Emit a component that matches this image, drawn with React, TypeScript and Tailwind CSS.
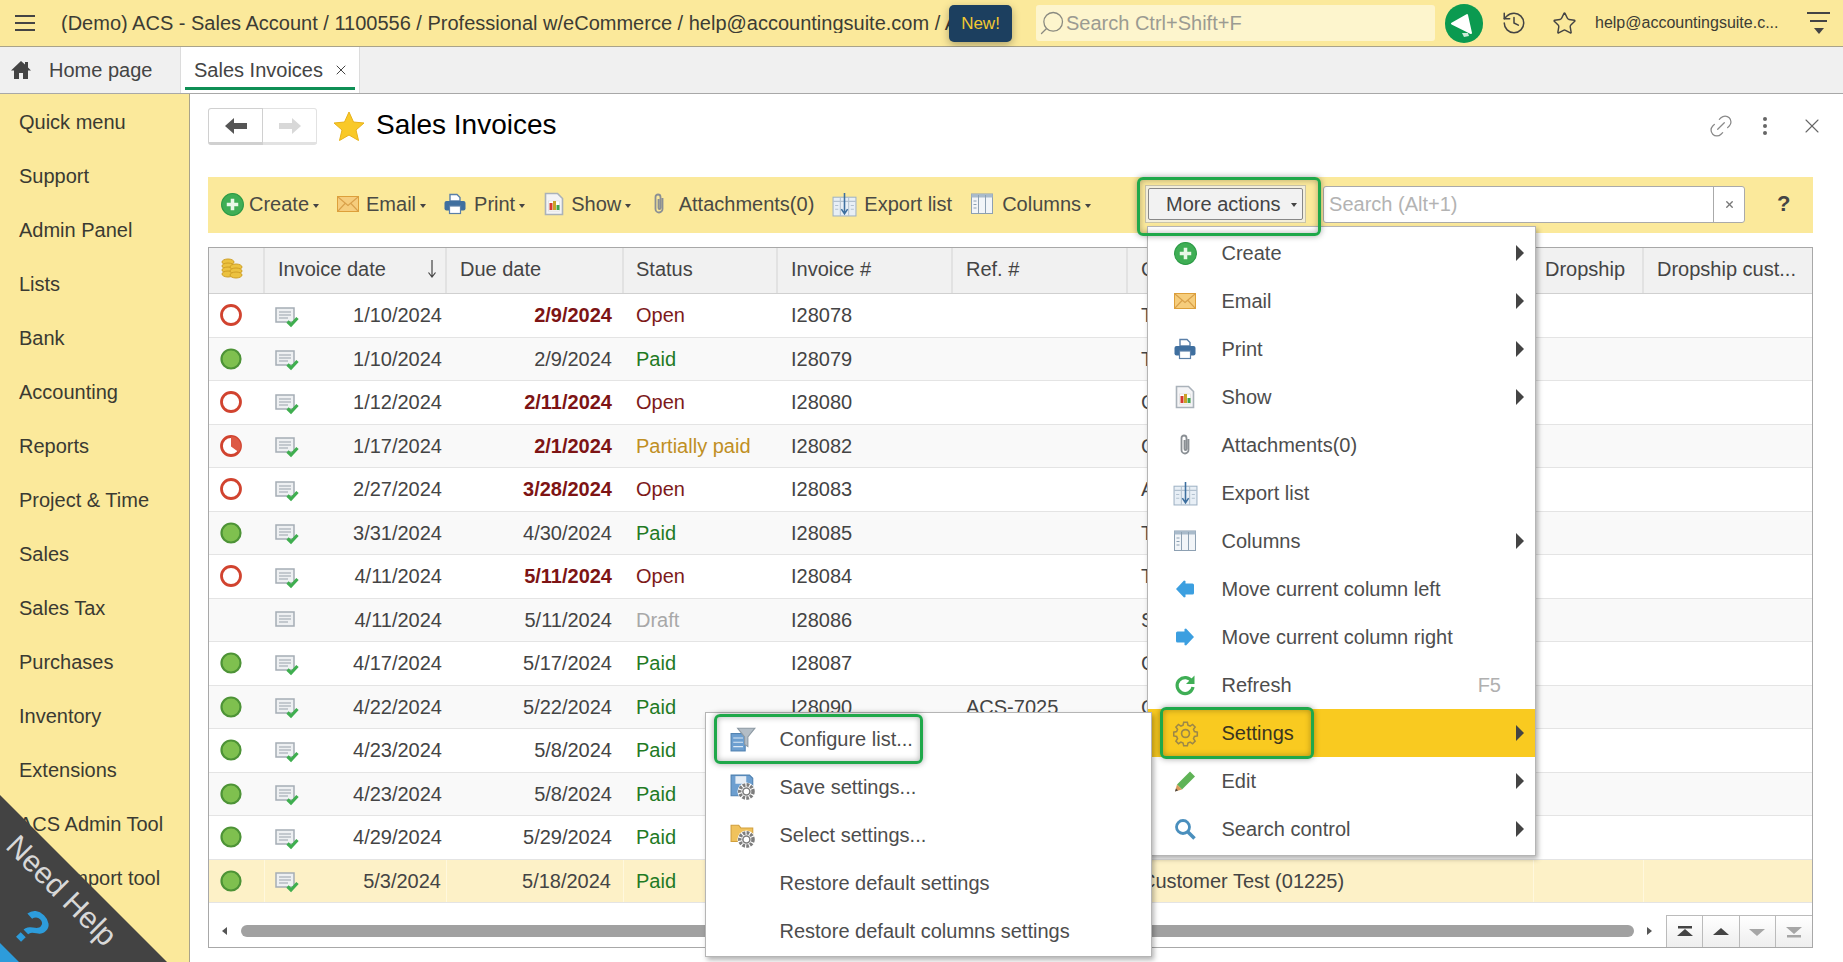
import type { ReactNode } from "react";
import { History, Link2, Search, Star, X } from "lucide-react";

type IconProps = { size?: number };

const CreateIcon = ({ size = 25 }: IconProps) => (
  <svg width={size} height={size} viewBox="0 0 24 24">
    <circle cx="12" cy="12" r="10.5" fill="#3fae55" stroke="#2b9a45" />
    <path d="M12 6.5v11M6.5 12h11" stroke="#e8f7e8" strokeWidth="3.4" />
  </svg>
);

const EmailIcon = ({ size = 24 }: IconProps) => (
  <svg width={size} height={size} viewBox="0 0 24 24">
    <rect x="1.5" y="4.5" width="21" height="15" fill="#f6cd7c" stroke="#dd9f3a" />
    <path d="M2 5l10 8.5L22 5M2 19l7.5-8M22 19l-7.5-8" fill="none" stroke="#d9a04a" strokeWidth="1.1" />
  </svg>
);

const PrintIcon = ({ size = 24 }: IconProps) => (
  <svg width={size} height={size} viewBox="0 0 24 24">
    <path d="M7 9V2.5h7l3 3V9z" fill="#fff" stroke="#5a7fa8" strokeWidth="1.4" />
    <rect x="1.5" y="9" width="21" height="9.5" rx="2" fill="#3f6f9f" />
    <rect x="6.5" y="14" width="11" height="7.5" fill="#fff" stroke="#5a7fa8" strokeWidth="1.2" />
  </svg>
);

const ShowIcon = ({ size = 24 }: IconProps) => (
  <svg width={size} height={size} viewBox="0 0 24 24">
    <path d="M3.5 1.5h12l5 5v16h-17z" fill="#f4f4f6" stroke="#aab2ba" strokeWidth="1.6" />
    <rect x="6.500" y="9" width="11" height="10" fill="#fff" stroke="#d8d8d8" strokeWidth=".6" />
    <rect x="7.500" y="11" width="3" height="7" fill="#d6392f" />
    <rect x="11" y="9" width="3" height="9" fill="#c9a227" />
    <rect x="14.500" y="13" width="3" height="5" fill="#3fa34d" />
  </svg>
);

const ClipIcon = ({ size = 24 }: IconProps) => (
  <svg width={size} height={size} viewBox="0 0 24 24">
    <path d="M15.5 6v11a3.5 3.5 0 0 1-7 0V5a2.500 2.500 0 0 1 5 0v11a1 1 0 0 1-2 0V7" fill="none" stroke="#8a8f94" strokeWidth="1.800" />
  </svg>
);

const ExportIcon = ({ size = 25 }: IconProps) => (
  <svg width={size} height={size} viewBox="0 0 24 24">
    <rect x="1" y="5" width="22" height="18" fill="#e8eff6" stroke="#9fb2c4" />
    <path d="M1 9h22M8 5v18M16 5v18M3 13h3M3 16.500h3M18 13h3M18 16.500h3" stroke="#b3c2d0" />
    <path d="M12 1v19M9 16.500l3 4.500 3-4.500" fill="none" stroke="#3d6f9f" strokeWidth="1.500" />
  </svg>
);

const ColumnsIcon = ({ size = 24 }: IconProps) => (
  <svg width={size} height={size} viewBox="0 0 24 24">
    <rect x="1.5" y="2" width="21" height="19.500" fill="#f2f5f8" stroke="#8da0b2" />
    <rect x="1.5" y="2" width="21" height="3.500" fill="#a9bbcb" />
    <path d="M8.5 3v18M15.5 3v18M3.5 9h3M3.5 12.500h3M3.5 16h3" stroke="#8da0b2" />
  </svg>
);

const MoveLeftIcon = ({ size = 24 }: IconProps) => (
  <svg width={size} height={size} viewBox="0 0 24 24">
    <path d="M3 12l8-8.500 1.500.5v2.500H19.500a1.500 1.500 0 0 1 1.500 1.500v8a1.500 1.500 0 0 1-1.500 1.500H12.500V20l-1.500.5z" fill="#3c9fe0" />
  </svg>
);

const MoveRightIcon = ({ size = 24 }: IconProps) => (
  <svg width={size} height={size} viewBox="0 0 24 24">
    <path d="M21 12l-8-8.500-1.500.5v2.500H4.500A1.500 1.500 0 0 0 3 8v8a1.500 1.500 0 0 0 1.500 1.500h7V20l1.500.5z" fill="#3c9fe0" />
  </svg>
);

const RefreshIcon = ({ size = 24 }: IconProps) => (
  <svg width={size} height={size} viewBox="0 0 24 24">
    <path d="M19 8.500A8 8 0 1 0 20 14" fill="none" stroke="#3fae55" strokeWidth="3.200" />
    <path d="M21.500 2.500v8.500H13z" fill="#3fae55" />
  </svg>
);

const GearIcon = ({ size = 27 }: IconProps) => (
  <svg width={size} height={size} viewBox="0 0 24 24">
    <g fill="none" stroke="#9c8748" strokeWidth="1.500">
      <path
        d="M10.200 2h3.600l.6 2.800 2.100.9 2.400-1.600 2.500 2.500-1.600 2.400.9 2.100 2.800.6v3.600l-2.800.6-.9 2.100 1.600 2.400-2.500 2.500-2.400-1.600-2.100.9-.6 2.800h-3.600l-.6-2.800-2.100-.9-2.400 1.600-2.500-2.500 1.600-2.400-.9-2.100-2.800-.6v-3.600l2.800-.6.9-2.100-1.600-2.400 2.500-2.500 2.400 1.600 2.100-.9z"
        transform="translate(1.100 .2) scale(.91)"
      />
      <circle cx="12" cy="12" r="3.500" />
    </g>
  </svg>
);

const PencilIcon = ({ size = 24 }: IconProps) => (
  <svg width={size} height={size} viewBox="0 0 24 24">
    <path d="M17 2.500l5 5L9 20.500l-5-5z" fill="#5fb356" />
    <path d="M4 15.500l5 5-7 2z" fill="#d99a5b" />
    <path d="M2 22.500l1-3 2 2z" fill="#444" />
  </svg>
);

const SearchBlue = ({ size = 24 }: IconProps) => (
  <svg width={size} height={size} viewBox="0 0 24 24">
    <circle cx="10" cy="10" r="6.500" fill="none" stroke="#4a8fbd" strokeWidth="2.800" />
    <path d="M15 15l6.500 6.500" stroke="#4a8fbd" strokeWidth="3.500" />
  </svg>
);

const ConfigureIcon = ({ size = 26 }: IconProps) => (
  <svg width={size} height={size} viewBox="0 0 24 24">
    <rect x="1" y="7" width="13" height="16" fill="#6d9fd0" stroke="#4f81b0" />
    <path d="M3 11h9M3 15h9M3 19h9" stroke="#dce9f5" />
    <path d="M7 2h16l-6.500 8v9l-3-2v-7z" fill="#b3bdc6" stroke="#8d99a3" />
  </svg>
);

const SmallGear = () => (
  <g transform="translate(6.500 7.500) scale(.72)">
    <circle cx="12" cy="12" r="11.500" fill="#fff" />
    <circle cx="12" cy="12" r="8.500" fill="none" stroke="#7d7d7d" strokeWidth="4.500" strokeDasharray="3.500 1.500" />
    <circle cx="12" cy="12" r="4.500" fill="#fff" stroke="#7d7d7d" strokeWidth="2" />
  </g>
);

const SaveSettingsIcon = ({ size = 26 }: IconProps) => (
  <svg width={size} height={size} viewBox="0 0 24 24">
    <path d="M1 1h17l3 3v16H1z" fill="#6d9fd0" stroke="#4f81b0" />
    <rect x="5" y="2" width="10" height="7" fill="#e6eef6" />
    <SmallGear />
  </svg>
);

const SelectSettingsIcon = ({ size = 26 }: IconProps) => (
  <svg width={size} height={size} viewBox="0 0 24 24">
    <path d="M1 3h7l2 2.500h11V18H1z" fill="#f0c25d" stroke="#d19f3c" />
    <SmallGear />
  </svg>
);

const CoinsIcon = () => (
  <svg width="22" height="22" viewBox="0 0 22 22">
    {[
      [7, 4],
      [7, 8],
      [7, 12],
      [7, 16],
      [15, 9],
      [15, 13],
      [15, 17],
    ].map(([cx, cy]) => (
      <ellipse key={`${cx}-${cy}`} cx={cx} cy={cy} rx="6" ry="3" fill="#ecc23f" stroke="#cf9f25" />
    ))}
  </svg>
);

const StatusIcon = ({ kind }: { kind: string }) => {
  if (kind === "Draft") return <span className="w-[24px] h-[24px]" />;
  if (kind === "Paid")
    return (
      <svg width="24" height="24" viewBox="0 0 24 24">
        <circle cx="12" cy="12" r="9.500" fill="#7fc04f" stroke="#4d9336" strokeWidth="2.200" />
      </svg>
    );
  if (kind === "Partially paid")
    return (
      <svg width="24" height="24" viewBox="0 0 24 24">
        <circle cx="12" cy="12" r="9.500" fill="#fff" stroke="#d1432f" strokeWidth="2.800" />
        <path d="M12 12.500V2.500a9.500 9.500 0 0 1 7.500 15.500z" fill="#dd5a45" />
      </svg>
    );
  return (
    <svg width="24" height="24" viewBox="0 0 24 24">
      <circle cx="12" cy="12" r="9.500" fill="#fff" stroke="#d1432f" strokeWidth="2.800" />
    </svg>
  );
};

const DocIcon = ({ check }: { check: boolean }) => (
  <svg width="24" height="21" viewBox="0 0 24 21" className="mt-[4px]">
    <rect x="1" y="1" width="18" height="14" fill="#eef0f2" stroke="#a5adb5" strokeWidth="1.500" />
    <path d="M4 5h12M4 8h12M4 11h9" stroke="#98a1aa" />
    {check && <path d="M12.500 14.500l3.500 3.500 6.500-7" fill="none" stroke="#3fae4f" strokeWidth="3.200" />}
  </svg>
);

const Caret = () => (
  <span className="ml-[4px] mt-[3px] w-0 h-0 border-x-[3.5px] border-t-[4px] border-x-transparent border-t-[#444]" />
);

const ToolItem = ({
  icon,
  label,
  caret,
  iconGap,
  className,
}: {
  icon: ReactNode;
  label: string;
  caret?: boolean;
  iconGap: string;
  className: string;
}) => (
  <div className={`flex items-center ${className}`}>
    <span className={iconGap}>{icon}</span>
    <span>{label}</span>
    {caret && <Caret />}
  </div>
);

const Arrow = () => (
  <span className="ml-auto mr-[11px] w-0 h-0 border-y-[8px] border-l-[8px] border-y-transparent border-l-[#444]" />
);

const MenuItem = ({
  icon,
  label,
  arrow,
  hint,
  active,
  children,
}: {
  icon?: ReactNode;
  label: string;
  arrow?: boolean;
  hint?: string;
  active?: boolean;
  children?: ReactNode;
}) => (
  <div className={`relative h-[48px] flex items-center ${active ? "bg-[#f9ca20] text-[#3a3520]" : ""}`}>
    <span className="w-[73.5px] shrink-0 flex justify-center pl-[1px]">{icon}</span>
    <span>{label}</span>
    {hint && <span className="ml-auto mr-[34px] text-[#b0b0b0]">{hint}</span>}
    {arrow && <Arrow />}
    {children}
  </div>
);

const Outline = ({ className }: { className: string }) => (
  <div
    className={`absolute z-30 rounded-[6px] border-[3px] border-[#1fa84a] shadow-[0_0_6px_rgba(0,0,0,0.35),inset_0_0_6px_rgba(0,0,0,0.3)] pointer-events-none ${className}`}
  />
);

const sideItems = [
  "Quick menu",
  "Support",
  "Admin Panel",
  "Lists",
  "Bank",
  "Accounting",
  "Reports",
  "Project & Time",
  "Sales",
  "Sales Tax",
  "Purchases",
  "Inventory",
  "Extensions",
  "ACS Admin Tool",
  "ACS Import tool",
];

type Row = {
  date: string;
  due: string;
  late?: boolean;
  status: string;
  num?: string;
  ref?: string;
  customer?: string;
};

const rows: Row[] = [
  { date: "1/10/2024", due: "2/9/2024", late: true, status: "Open", num: "I28078", customer: "T" },
  { date: "1/10/2024", due: "2/9/2024", status: "Paid", num: "I28079", customer: "T" },
  { date: "1/12/2024", due: "2/11/2024", late: true, status: "Open", num: "I28080", customer: "C" },
  { date: "1/17/2024", due: "2/1/2024", late: true, status: "Partially paid", num: "I28082", customer: "C" },
  { date: "2/27/2024", due: "3/28/2024", late: true, status: "Open", num: "I28083", customer: "A" },
  { date: "3/31/2024", due: "4/30/2024", status: "Paid", num: "I28085", customer: "T" },
  { date: "4/11/2024", due: "5/11/2024", late: true, status: "Open", num: "I28084", customer: "T" },
  { date: "4/11/2024", due: "5/11/2024", status: "Draft", num: "I28086", customer: "S" },
  { date: "4/17/2024", due: "5/17/2024", status: "Paid", num: "I28087", customer: "C" },
  { date: "4/22/2024", due: "5/22/2024", status: "Paid", num: "I28090", ref: "ACS-7025", customer: "C" },
  { date: "4/23/2024", due: "5/8/2024", status: "Paid" },
  { date: "4/23/2024", due: "5/8/2024", status: "Paid" },
  { date: "4/29/2024", due: "5/29/2024", status: "Paid" },
  { date: "5/3/2024", due: "5/18/2024", status: "Paid", customer: "Customer Test (01225)" },
];

const statusColor: Record<string, string> = {
  Open: "text-[#7d1a1a]",
  Paid: "text-[#1f7a24]",
  "Partially paid": "text-[#c08f24]",
  Draft: "text-[#a8a8a8]",
};

const gridCols = "grid grid-cols-[56px_182px_177px_154px_175px_175px_406px_110px_168px]";

const HeadCell = ({ children, className = "" }: { children?: ReactNode; className?: string }) => (
  <div className={`flex items-center pb-[3px] border-r-2 border-[#e2e2e2] ${className}`}>{children}</div>
);

export default function App() {
  return (
    <div className="relative w-full h-screen overflow-hidden flex flex-col bg-white text-[20px] leading-none text-[#444] font-['Liberation_Sans',sans-serif]">
      {/* top bar */}
      <header className="h-[47px] shrink-0 flex items-center bg-[#fbe99b] border-b border-[#a9a38a]">
        <div className="ml-[15px] w-[20px] flex flex-col gap-[5px]">
          <span className="h-[2px] bg-[#444]" />
          <span className="h-[2px] bg-[#444]" />
          <span className="h-[2px] bg-[#444]" />
        </div>
        <div className="ml-[26px] w-[888px] overflow-hidden whitespace-nowrap text-[#3c3c34]">
          (Demo) ACS - Sales Account / 1100556 / Professional w/eCommerce / help@accountingsuite.com / A
        </div>
        <div className="w-[63px] h-[37px] flex items-center justify-center rounded-[5px] bg-[#1c3f5f] text-[#f2c832] text-[17px] shadow-[0_3px_8px_rgba(0,0,0,0.3)]">
          New!
        </div>
        <div className="ml-[24px] w-[399px] h-[36px] flex items-center rounded-[3px] bg-[#fdf5cd] text-[#9b9b92]">
          <Search size={28} strokeWidth={1.1} className="ml-[2px] -scale-x-100 text-[#8a8a80]" />
          <span>Search Ctrl+Shift+F</span>
        </div>
        <div className="ml-[10px] w-[38px] h-[39px] flex items-center justify-center rounded-full bg-[#0b9a50]">
          <svg width="38" height="39" viewBox="0 0 38 39">
            <path d="M7 19.500L22 11l4 18z" fill="#fff" stroke="#fff" strokeWidth="2" strokeLinejoin="round" />
            <path d="M17 29l2 4 5-1-1-3z" fill="#cdebd9" />
          </svg>
        </div>
        <History size={26} strokeWidth={1.4} className="ml-[18px] text-[#444]" />
        <Star size={25} strokeWidth={1.4} className="ml-[25px] text-[#444]" />
        <span className="ml-[18px] w-[187px] whitespace-nowrap text-[16px] text-[#3c3c34]">help@accountingsuite.c...</span>
        <div className="ml-[25px] w-[23px] flex flex-col items-center gap-[6px]">
          <span className="w-full h-[2px] bg-[#444]" />
          <span className="w-[17px] h-[2px] bg-[#444]" />
          <span className="w-0 h-0 border-x-[5px] border-t-[6px] border-x-transparent border-t-[#444]" />
        </div>
      </header>

      {/* open tabs */}
      <div className="h-[47px] shrink-0 flex bg-[#f0f0f0] border-b border-[#a8a8a8]">
        <div className="w-[180px] flex items-center">
          <svg width="22" height="20" viewBox="0 0 22 20" className="ml-[10px]">
            <path d="M11 1L1 10.500h3V19h5v-6h4v6h5v-8.500h3l-3-3V2h-3v2.500z" fill="#444" />
          </svg>
          <span className="ml-[17px]">Home page</span>
        </div>
        <div className="w-[180px] px-[4px] bg-white border-x border-[#dcdcdc]">
          <div className="h-[43px] pt-[5px] flex items-center pl-[9px] border-b-[3px] border-[#0f8f55]">
            <span>Sales Invoices</span>
            <X size={16} strokeWidth={1.5} className="ml-[10px]" />
          </div>
        </div>
      </div>

      <div className="flex-1 flex min-h-0">
        {/* left menu */}
        <aside className="w-[190px] shrink-0 bg-[#fbe99b] border-r border-[#a9a38a] pt-px text-[#3a3a32]">
          {sideItems.map((item) => (
            <div key={item} className="h-[54px] flex items-center pl-[19px] whitespace-nowrap">
              {item}
            </div>
          ))}
        </aside>

        <main className="flex-1 min-w-0 pl-[18px] pr-[30px]">
          {/* title row */}
          <div className="mt-[14px] h-[37px] flex items-center">
            <div className="flex h-full">
              <div className="w-[55px] flex items-center justify-center bg-white border border-[#d0d0d0] border-b-[3px] rounded-l-[3px]">
                <svg width="24" height="18" viewBox="0 0 24 18">
                  <path d="M1 9l9-8v5h13v6H10v5z" fill="#555" />
                </svg>
              </div>
              <div className="w-[54px] flex items-center justify-center bg-white border border-l-0 border-[#e2e2e2] border-b-[3px] rounded-r-[3px]">
                <svg width="24" height="18" viewBox="0 0 24 18">
                  <path d="M23 9l-9-8v5H1v6h13v5z" fill="#d8d8d8" />
                </svg>
              </div>
            </div>
            <svg width="32" height="30" viewBox="0 0 32 30" className="ml-[16px] mb-[2px]">
              <path d="M16 1l4.500 10 10.500 1-8 7 2.500 10.500L16 24l-9.500 5.500L9 19l-8-7 10.500-1z" fill="#f9c928" stroke="#e8b21a" />
            </svg>
            <h1 className="ml-[11px] mb-[3px] text-[28px] font-normal text-black">Sales Invoices</h1>
            <Link2 size={28} strokeWidth={1.1} className="ml-auto mr-[28px] mb-[2px] -rotate-45 text-[#8a8a8a]" />
            <div className="mr-[33px] mb-[2px] flex flex-col gap-[3px]">
              <span className="w-[4px] h-[4px] rounded-full bg-[#666]" />
              <span className="w-[4px] h-[4px] rounded-full bg-[#666]" />
              <span className="w-[4px] h-[4px] rounded-full bg-[#666]" />
            </div>
            <X size={24} strokeWidth={1.1} className="mr-[-11px] mb-[2px] text-[#666]" />
          </div>

          {/* toolbar */}
          <div className="mt-[32px] h-[56px] flex items-center pl-[12px] pb-[2px] bg-[#fbe99b] text-[#4a4a44] whitespace-nowrap">
            <ToolItem icon={<CreateIcon />} label="Create" caret iconGap="mr-[4px]" className="" />
            <ToolItem icon={<EmailIcon />} label="Email" caret iconGap="mr-[6px]" className="ml-[17px]" />
            <ToolItem icon={<PrintIcon />} label="Print" caret iconGap="mr-[7px]" className="ml-[17px]" />
            <ToolItem icon={<ShowIcon />} label="Show" caret iconGap="mr-[5px]" className="ml-[17px]" />
            <ToolItem icon={<ClipIcon />} label="Attachments(0)" iconGap="mr-[7.5px]" className="ml-[16px]" />
            <ToolItem icon={<ExportIcon />} label="Export list" iconGap="mr-[7px]" className="ml-[18px]" />
            <ToolItem icon={<ColumnsIcon />} label="Columns" caret iconGap="mr-[8px]" className="ml-[18px]" />

            <div className="relative ml-[54px] w-[161px] h-[38px] p-[2px] border border-[#c9c4a8] bg-[#f3efdc]">
              <div className="h-full flex items-center pl-[17px] border border-[#888] rounded-[2px] bg-[#f2f2f2] text-[#444]">
                More actions
                <span className="ml-[10px] mt-[2px] w-0 h-0 border-x-[3.5px] border-t-[4px] border-x-transparent border-t-[#444]" />
              </div>
              <Outline className="left-[-9px] top-[-9px] w-[184px] h-[59px]" />
            </div>

            <div className="ml-[17px] w-[422px] h-[37px] flex bg-white border border-[#aaa] rounded-[3px] text-[#b3b3b3]">
              <span className="flex-1 flex items-center pl-[5px]">Search (Alt+1)</span>
              <span className="w-[31px] flex items-center justify-center border-l border-[#aaa] text-[#777]">
                <X size={11} strokeWidth={3} />
              </span>
            </div>
            <span className="ml-[32px] text-[#444] font-bold text-[22px]">?</span>
          </div>

          {/* invoice list */}
          <div className="mt-[14px] h-[701px] border border-[#a8a8a8] flex flex-col">
            <div className={`${gridCols} h-[46px] bg-[#f1f1f1] border-b border-[#d0d0d0] whitespace-nowrap text-[#444]`}>
              <HeadCell className="justify-center pr-[8px]">
                <CoinsIcon />
              </HeadCell>
              <HeadCell className="pl-[13px] justify-between pr-[7px]">
                Invoice date
                <svg width="12" height="20" viewBox="0 0 12 20">
                  <path d="M6 1v17M2.500 13.500L6 18l3.500-4.500" fill="none" stroke="#444" strokeWidth="1.200" />
                </svg>
              </HeadCell>
              <HeadCell className="pl-[13px]">Due date</HeadCell>
              <HeadCell className="pl-[12px]">Status</HeadCell>
              <HeadCell className="pl-[13px]">Invoice #</HeadCell>
              <HeadCell className="pl-[13px]">Ref. #</HeadCell>
              <HeadCell className="pl-[13px]">Customer</HeadCell>
              <HeadCell className="pl-[11px]">Dropship</HeadCell>
              <div className="flex items-center pb-[3px] pl-[13px]">Dropship cust...</div>
            </div>

            {rows.map((row, i) => {
              const highlighted = i === rows.length - 1;
              const cellSep = highlighted ? "border-r border-[#fff8dd]" : "";
              return (
                <div
                  key={i}
                  className={`${gridCols} h-[43.5px] shrink-0 items-stretch border-b border-[#e4e4e4] whitespace-nowrap ${
                    highlighted ? "bg-[#fdf1c7]" : i % 2 === 0 ? "bg-white" : "bg-[#f9f9f9]"
                  }`}
                >
                  <div className={`flex items-center justify-center pr-[12px] ${cellSep}`}>
                    <StatusIcon kind={row.status} />
                  </div>
                  <div className={`flex items-center justify-between pl-[10px] pr-[5px] ${cellSep}`}>
                    <DocIcon check={row.status !== "Draft"} />
                    {row.date}
                  </div>
                  <div className={`flex items-center justify-end pr-[12px] ${cellSep} ${row.late ? "font-bold text-[#7d1414]" : ""}`}>
                    {row.due}
                  </div>
                  <div className={`flex items-center pl-[12px] ${cellSep} ${statusColor[row.status]}`}>{row.status}</div>
                  <div className={`flex items-center pl-[13px] ${cellSep}`}>{row.num}</div>
                  <div className={`flex items-center pl-[13px] ${cellSep}`}>{row.ref}</div>
                  <div className={`flex items-center pl-[13px] ${cellSep}`}>{row.customer}</div>
                  <div className={cellSep} />
                  <div />
                </div>
              );
            })}

            {/* list footer */}
            <div className="flex-1 flex items-end">
              <div className="flex-1 h-[32px] flex items-center">
                <span className="ml-[13px] w-0 h-0 border-y-[4px] border-r-[5px] border-y-transparent border-r-[#555]" />
                <div className="ml-[14px] flex-1 h-[12px] rounded-full bg-[#a1a1a1]" />
                <span className="ml-[13px] mr-[14px] w-0 h-0 border-y-[4px] border-l-[5px] border-y-transparent border-l-[#555]" />
              </div>
              <div className="w-[146px] h-[32px] grid grid-cols-4 border-t border-l border-[#bbb]">
                {[
                  { fill: "#444", d: "M8 2h14v2.500H8zM15 5l8 7H7z" },
                  { fill: "#444", d: "M15 4l8 7H7z" },
                  { fill: "#a6a6a6", d: "M15 12l8-7H7z" },
                  { fill: "#a6a6a6", d: "M15 10l8-7H7zM8 11h14v2.500H8z" },
                ].map((b, i) => (
                  <div key={i} className="flex items-center justify-center border-r border-[#bbb] last:border-r-0 bg-gradient-to-b from-white to-[#eeeeee]">
                    <svg width="30" height="15" viewBox="0 0 30 15">
                      <path d={b.d} fill={b.fill} />
                    </svg>
                  </div>
                ))}
              </div>
            </div>
          </div>
        </main>
      </div>

      {/* More actions menu */}
      <div className="absolute z-20 left-[1147px] top-[226px] w-[389px] py-[2px] bg-white border border-[#b5b5b5] shadow-[2px_3px_5px_rgba(0,0,0,0.3)] whitespace-nowrap text-[#4d4d4d]">
        <MenuItem icon={<CreateIcon />} label="Create" arrow />
        <MenuItem icon={<EmailIcon />} label="Email" arrow />
        <MenuItem icon={<PrintIcon />} label="Print" arrow />
        <MenuItem icon={<ShowIcon />} label="Show" arrow />
        <MenuItem icon={<ClipIcon />} label="Attachments(0)" />
        <MenuItem icon={<ExportIcon />} label="Export list" />
        <MenuItem icon={<ColumnsIcon />} label="Columns" arrow />
        <MenuItem icon={<MoveLeftIcon />} label="Move current column left" />
        <MenuItem icon={<MoveRightIcon />} label="Move current column right" />
        <MenuItem icon={<RefreshIcon />} label="Refresh" hint="F5" />
        <MenuItem icon={<GearIcon />} label="Settings" arrow active>
          <Outline className="left-[12px] top-[-2px] w-[154px] h-[52px]" />
        </MenuItem>
        <MenuItem icon={<PencilIcon />} label="Edit" arrow />
        <MenuItem icon={<SearchBlue />} label="Search control" arrow />
      </div>

      {/* Settings submenu */}
      <div className="absolute z-40 left-[705px] top-[712px] w-[447px] py-[1.500px] bg-white border border-[#b5b5b5] shadow-[2px_3px_5px_rgba(0,0,0,0.3)] whitespace-nowrap text-[#4d4d4d]">
        <MenuItem icon={<ConfigureIcon />} label="Configure list...">
          <Outline className="left-[8px] top-[-1px] w-[209px] h-[50px]" />
        </MenuItem>
        <MenuItem icon={<SaveSettingsIcon />} label="Save settings..." />
        <MenuItem icon={<SelectSettingsIcon />} label="Select settings..." />
        <MenuItem label="Restore default settings" />
        <MenuItem label="Restore default columns settings" />
      </div>

      {/* Need Help corner */}
      <svg width="170" height="170" viewBox="0 0 170 170" className="absolute z-10 left-0 bottom-0">
        <path d="M0 3L167 170H0z" fill="#434343" />
        <path d="M0 151L19 170H0z" fill="#2d9cdb" />
      </svg>
      <span className="absolute z-10 left-[-9px] top-[875px] w-[140px] text-center rotate-45 whitespace-nowrap text-[30px] text-[#d8d8d8]">
        Need Help
      </span>
      <span className="absolute z-10 left-[16px] top-[903px] rotate-45 text-[50px] font-bold text-[#2d9cdb]">?</span>
    </div>
  );
}
